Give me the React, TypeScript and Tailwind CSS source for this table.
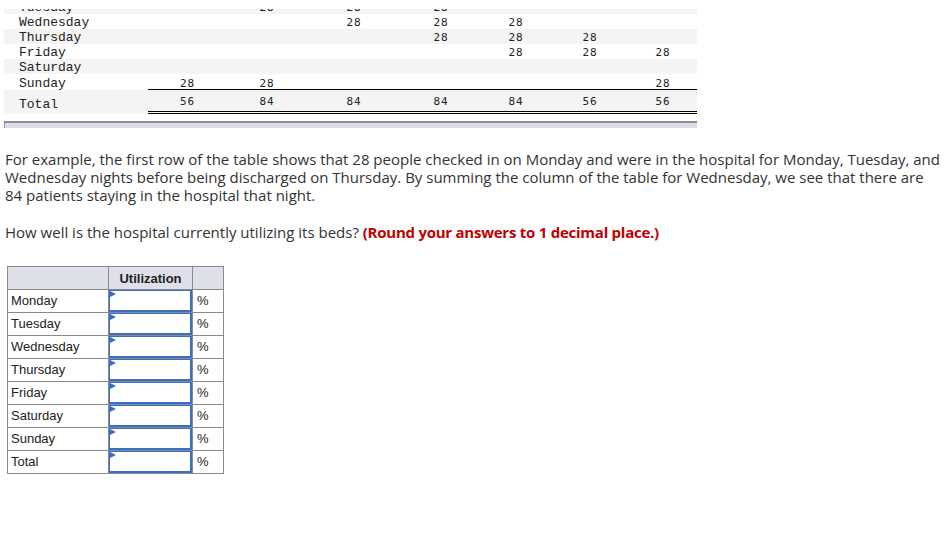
import React from "react";

const mono = { fontFamily: '"Liberation Mono", "Courier New", monospace' };
const numFont = { fontFamily: '"DejaVu Sans Mono", monospace' };

const colW = ["w-[79px]", "w-[80px]", "w-[94px]", "w-[80px]", "w-[70px]", "w-[78px]", "w-[68px]"];

type Row = { label: string; vals: string[]; gray: boolean };

const rows: Row[] = [
  { label: "Wednesday", vals: ["", "", "28", "28", "28", "", ""], gray: false },
  { label: "Thursday", vals: ["", "", "", "28", "28", "28", ""], gray: true },
  { label: "Friday", vals: ["", "", "", "", "28", "28", "28"], gray: false },
  { label: "Saturday", vals: ["", "", "", "", "", "", ""], gray: true },
];

function Cells({ vals }: { vals: string[] }) {
  return (
    <>
      {vals.map((v, i) => (
        <div key={i} className={`${colW[i]} text-center text-[11px] leading-[13px] tracking-[1px] text-[#222]`} style={numFont}>
          {v}
        </div>
      ))}
    </>
  );
}

const days = ["Monday", "Tuesday", "Wednesday", "Thursday", "Friday", "Saturday", "Sunday", "Total"];

export default function App() {
  return (
    <div className="w-[945px] h-[538px] bg-white relative overflow-hidden">
      {/* top table */}
      <div className="pt-[9px] pl-[4px] w-[697px]">
        <div className="h-[5px] overflow-hidden bg-[#f4f4f4]">
          <div className="flex h-[15px] pt-[2px] -mt-[10px]">
            <div className="w-[144px] pl-[15px] text-[13px] leading-[13px] text-[#222]" style={mono}>Tuesday</div>
            <Cells vals={["", "28", "28", "28", "", "", ""]} />
          </div>
        </div>
        {rows.map((r) => (
          <div key={r.label} className={`flex h-[15px] pt-[2px] ${r.gray ? "bg-[#f4f4f4]" : "bg-white"}`}>
            <div className="w-[144px] pl-[15px] text-[13px] leading-[13px] text-[#222]" style={mono}>{r.label}</div>
            <Cells vals={r.vals} />
          </div>
        ))}
        <div className="flex h-[16px] bg-white">
          <div className="w-[144px] pl-[15px] pt-[3px] text-[13px] leading-[13px] text-[#222]" style={mono}>Sunday</div>
          <div className="flex border-b border-black pt-[3px]">
            <Cells vals={["28", "28", "", "", "", "", "28"]} />
          </div>
        </div>
        <div className="flex h-[24px] bg-[#f4f4f4]">
          <div className="w-[144px] pl-[15px] text-[13px] pt-[8px] leading-[13px] text-[#222]" style={mono}>Total</div>
          <div className="flex h-[24px] border-b-[3px] border-double border-black pt-[5px] bg-[#f4f4f4]">
            <Cells vals={["56", "84", "84", "84", "84", "56", "56"]} />
          </div>
        </div>
        <div className="mt-[7px] h-[7px] bg-[#d9dee9] border-t-2 border-l border-[#8e8e8e]" />
      </div>

      {/* paragraphs */}
      <div
        className="pl-[5px] mt-[22px] text-[15px] leading-[18px] text-[#333]"
        style={{ fontFamily: '"Open Sans", "Lato", sans-serif' }}
      >
        <p className="whitespace-nowrap">
          For example, the first row of the table shows that 28 people checked in on Monday and were in the hospital for Monday, Tuesday, and
          <br />
          Wednesday nights before being discharged on Thursday. By summing the column of the table for Wednesday, we see that there are
          <br />
          84 patients staying in the hospital that night.
        </p>
        <p className="mt-[19px] whitespace-nowrap">
          How well is the hospital currently utilizing its beds?{" "}
          <span className="font-bold text-[#c00000] tracking-[-0.25px]">(Round your answers to 1 decimal place.)</span>
        </p>
      </div>

      {/* utilization table */}
      <div className="ml-[7px] mt-[25px]" style={{ fontFamily: '"Liberation Sans", Arial, sans-serif' }}>
        <table className="border-collapse text-[13px] text-[#222]">
          <tbody>
            <tr className="h-[23px] bg-[#dde0e8]">
              <td className="w-[101px] border border-[#8a8a8a]" />
              <td className="w-[84px] border border-[#8a8a8a] text-center font-bold pt-[1px]">Utilization</td>
              <td className="w-[31px] border border-[#8a8a8a]" />
            </tr>
            {days.map((d) => (
              <tr key={d} className="h-[23px]">
                <td className="border border-[#8a8a8a] pl-[3px] align-middle">{d}</td>
                <td className="border border-[#8a8a8a] p-0">
                  <div className="relative h-[22px] border-2 border-[#3b6fc2] border-t border-l">
                    <svg className="absolute left-0 top-0" width="7" height="7" viewBox="0 0 7 7">
                      <polygon points="0,0 6,3 0,6" fill="#2f6fd0" />
                    </svg>
                  </div>
                </td>
                <td className="border border-[#8a8a8a] pl-[4px]">%</td>
              </tr>
            ))}
          </tbody>
        </table>
      </div>
    </div>
  );
}
